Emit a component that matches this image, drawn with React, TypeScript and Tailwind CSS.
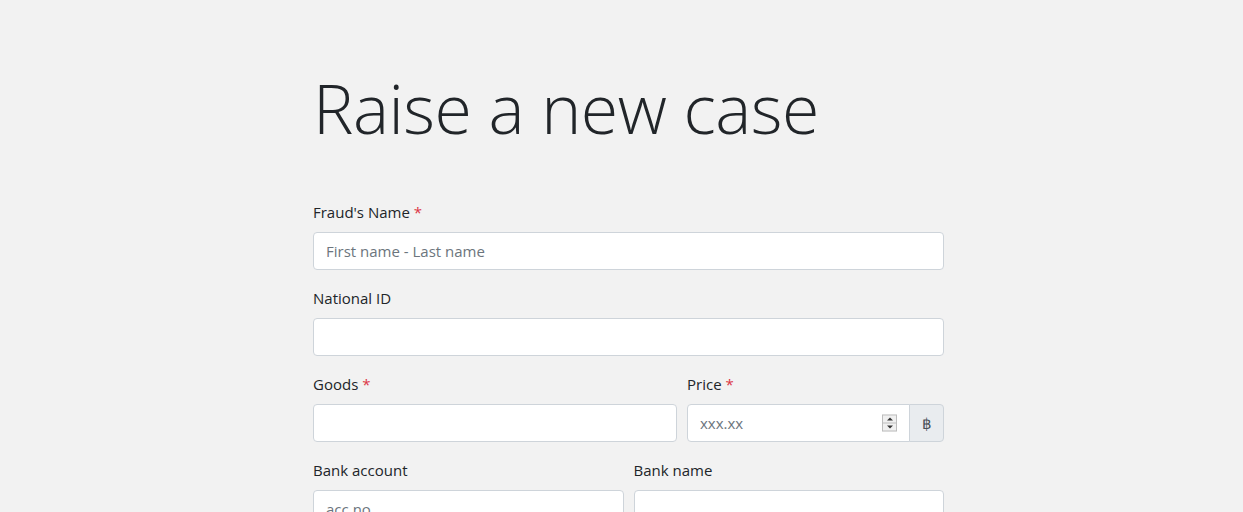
import React from "react";

const font = { fontFamily: '"Open Sans", "Segoe UI", sans-serif' };

function Label({ text, required }: { text: string; required?: boolean }) {
  return (
    <label className="mb-2 block text-[15px] leading-6 text-[#212529]">
      {text}
      {required && <span className="ml-1 text-[#dc3545]">*</span>}
    </label>
  );
}

function Field({
  placeholder,
  className = "",
}: {
  placeholder?: string;
  className?: string;
}) {
  return (
    <input
      type="text"
      placeholder={placeholder}
      className={`h-[38px] w-full rounded-[4px] border border-[#ced4da] bg-white px-3 text-[15px] text-[#495057] outline-none placeholder:text-[#6c757d] ${className}`}
    />
  );
}

function Spinner() {
  return (
    <div className="absolute right-[13px] top-1/2 flex h-[17px] w-[15px] -translate-y-1/2 flex-col border border-[#bdbdbd] bg-[#f0f0f0]">
      <div className="flex flex-1 items-center justify-center border-b border-[#bdbdbd]">
        <div className="h-0 w-0 border-x-[3px] border-b-[3px] border-x-transparent border-b-[#333]" />
      </div>
      <div className="flex flex-1 items-center justify-center">
        <div className="h-0 w-0 border-x-[3px] border-t-[3px] border-x-transparent border-t-[#333]" />
      </div>
    </div>
  );
}

export default function App() {
  return (
    <div className="min-h-[512px] bg-[#f2f2f2]" style={font}>
      <div className="ml-[313px] w-[631px] pt-[60px]">
        <h1 className="mb-[44px] text-[68px] font-light leading-[96px] tracking-[-0.5px] text-[#212529]">
          Raise a new case
        </h1>

        <div className="mb-4">
          <Label text="Fraud's Name" required />
          <Field placeholder="First name - Last name" />
        </div>

        <div className="mb-4">
          <Label text="National ID" />
          <Field />
        </div>

        <div className="mb-4 grid grid-cols-[364px_257px] gap-x-[10px]">
          <div>
            <Label text="Goods" required />
            <Field />
          </div>
          <div>
            <Label text="Price" required />
            <div className="flex">
              <div className="relative flex-1">
                <input
                  type="text"
                  placeholder="xxx.xx"
                  className="h-[38px] w-full rounded-l-[4px] border border-[#ced4da] bg-white px-3 text-[15px] text-[#495057] outline-none placeholder:text-[#6c757d]"
                />
                <Spinner />
              </div>
              <div className="-ml-px flex h-[38px] w-[35px] items-center justify-center rounded-r-[4px] border border-[#ced4da] bg-[#e9ecef] text-[15px] text-[#495057]">
                ฿
              </div>
            </div>
          </div>
        </div>

        <div className="mb-4 grid grid-cols-2 gap-x-[10px]">
          <div>
            <Label text="Bank account" />
            <Field placeholder="acc.no" />
          </div>
          <div>
            <Label text="Bank name" />
            <Field />
          </div>
        </div>
      </div>
    </div>
  );
}
